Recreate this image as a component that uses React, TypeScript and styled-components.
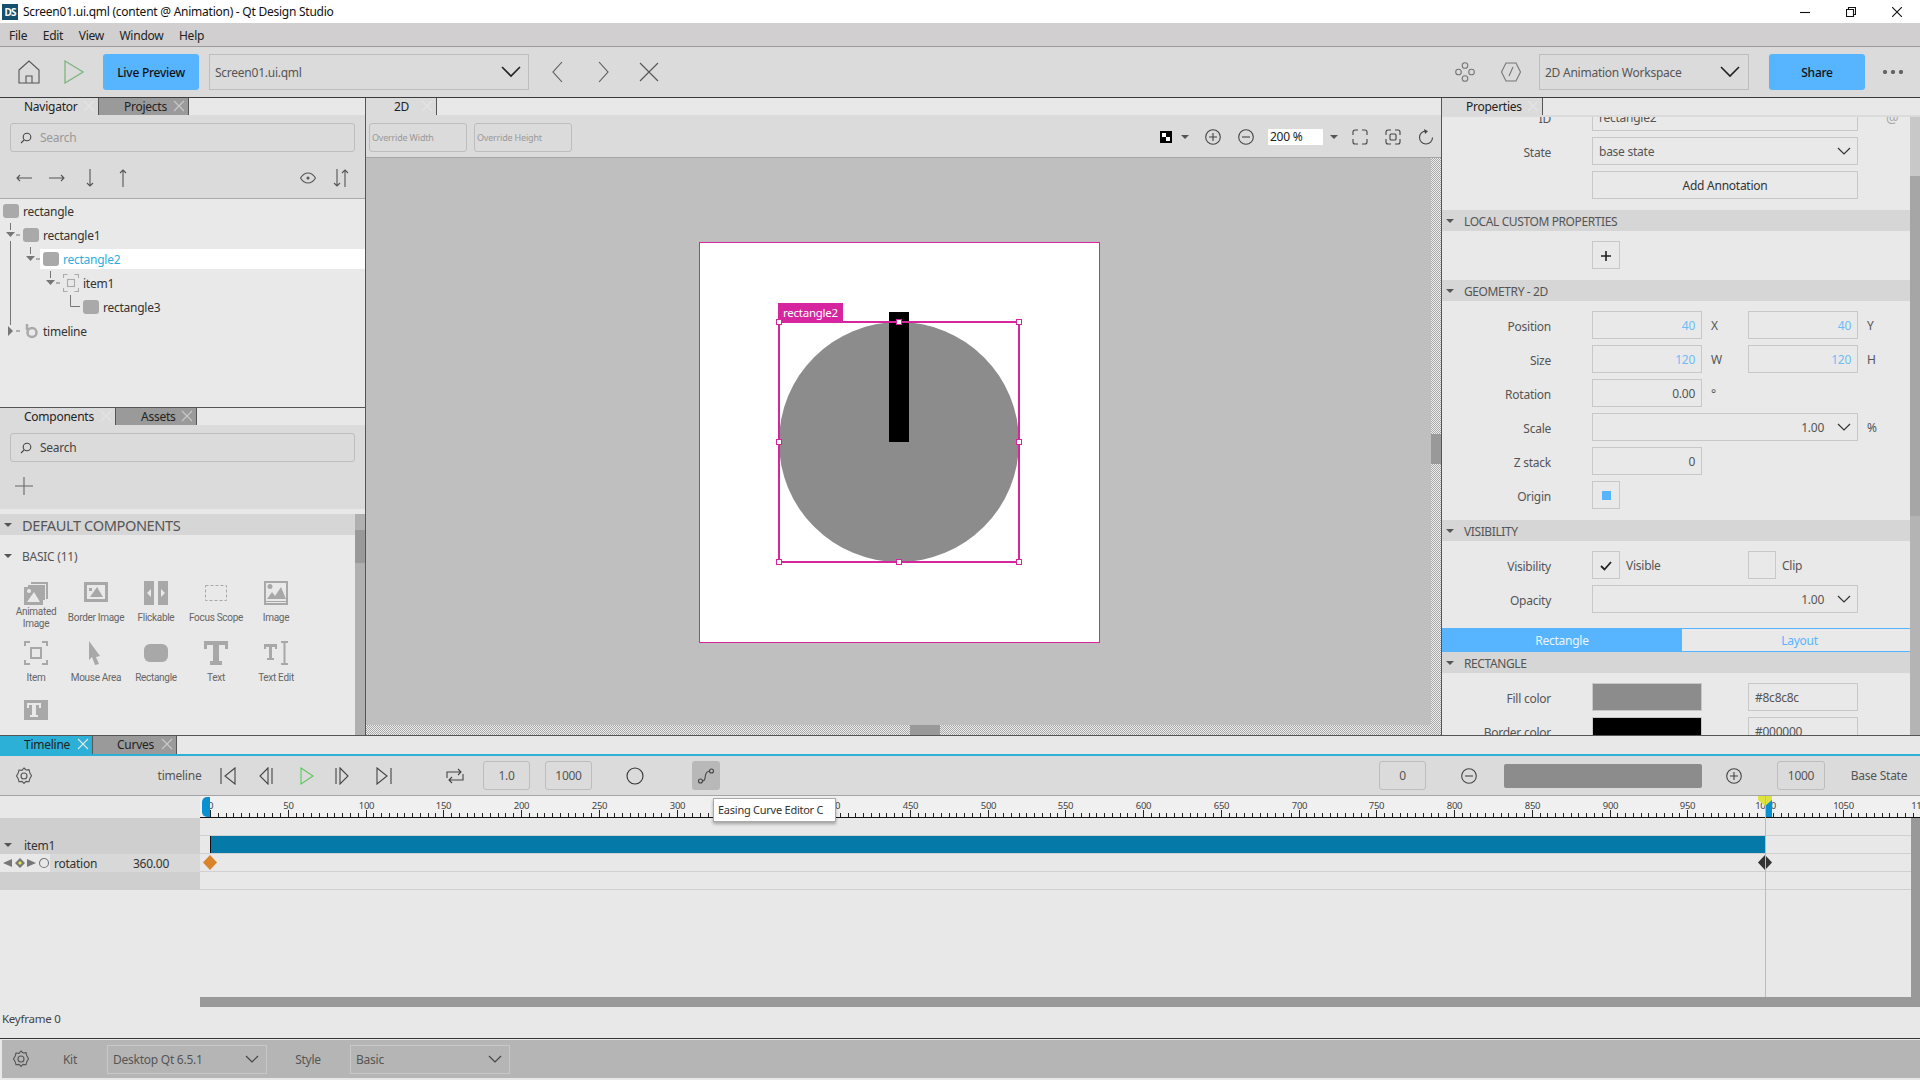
import React from "react";
import styled, { createGlobalStyle } from "styled-components";

const FONT = `"Noto Sans", "Open Sans", sans-serif`;
const MAGENTA = "#d6269f";
const BLUE = "#57b5ff";

const GlobalStyle = createGlobalStyle`
  html, body { margin: 0; padding: 0; width: 1920px; height: 1080px; overflow: hidden; }
  body { font-family: ${FONT}; font-size: 12px; color: #333; background: #e8e8e8; }
  * { box-sizing: border-box; }
`;

// Small line icons, all share this base
const Svg = styled.svg.attrs<{ $color?: string; strokeWidth?: number }>((p) => ({
  fill: "none",
  stroke: "currentColor",
  strokeWidth: p.strokeWidth ?? 1.1,
}))<{ $color?: string }>`
  display: block;
  flex: none;
  color: ${(p) => p.$color || "#555"};
`;

const Page = styled.div`
  width: 1920px;
  height: 1080px;
  display: flex;
  flex-direction: column;
  letter-spacing: -0.25px;
`;

/* window chrome */
const TitleBar = styled.div`
  height: 23px;
  background: #fff;
  display: flex;
  align-items: center;
  padding-left: 2px;
  font-size: 12px;
  color: #111;
`;
const AppLogo = styled.div`
  width: 16px;
  height: 16px;
  background: #14506e;
  color: #fff;
  font-size: 10px;
  font-weight: 700;
  line-height: 16px;
  text-align: center;
  margin-right: 5px;
  letter-spacing: -1px;
`;
const WindowButtons = styled.div`
  margin-left: auto;
  display: flex;
`;
const WindowButton = styled.div`
  width: 46px;
  height: 23px;
  display: flex;
  align-items: center;
  justify-content: center;
`;
const MenuBar = styled.div`
  height: 24px;
  background: #d1cfcf;
  border-bottom: 1px solid #9b9b9b;
  display: flex;
  align-items: center;
  padding: 2px 0 0 9px;
  gap: 15.5px;
  color: #222;
`;
const Toolbar = styled.div`
  height: 50px;
  background: #dcdbdb;
  display: flex;
  align-items: center;
`;
const Slot = styled.div<{ $w: number; $ml?: number }>`
  width: ${(p) => p.$w}px;
  margin-left: ${(p) => p.$ml || 0}px;
  flex: none;
  display: flex;
  justify-content: center;
  align-items: center;
  white-space: nowrap;
`;
const BlueButton = styled.div<{ $w: number; $ml: number }>`
  width: ${(p) => p.$w}px;
  margin-left: ${(p) => p.$ml}px;
  height: 36px;
  background: ${BLUE};
  border-radius: 3px;
  color: #111;
  font-weight: 500;
  display: flex;
  align-items: center;
  justify-content: center;
`;
const Combo = styled.div<{ $w: number; $h?: number; $ml: number; $border?: string; $pad?: number }>`
  width: ${(p) => p.$w}px;
  height: ${(p) => p.$h || 36}px;
  margin-left: ${(p) => p.$ml}px;
  border: 1px solid ${(p) => p.$border || "#bdbdbd"};
  display: flex;
  align-items: center;
  justify-content: space-between;
  padding: 0 ${(p) => p.$pad ?? 8}px 0 5px;
  color: #555;
  flex: none;
`;
const Spacer = styled.div`
  flex: 1;
`;

/* main area */
const Main = styled.div`
  height: 638px;
  display: flex;
  border-top: 1px solid #3c3c3c;
`;
const LeftPanel = styled.div`
  width: 366px;
  border-right: 1px solid #555;
  display: flex;
  flex-direction: column;
`;
const TabBar = styled.div<{ $h?: number }>`
  height: ${(p) => p.$h || 17}px;
  background: #e8e8e8;
  display: flex;
  flex: none;
`;
const Tab = styled.div<{ $w: number; $tone?: "on" | "off" | "teal"; $pad: number }>`
  width: ${(p) => p.$w}px;
  background: ${(p) => (p.$tone === "off" ? "#9a9a9a" : p.$tone === "teal" ? "#2cb0d8" : "#dcdbdb")};
  border-right: 1px solid #555;
  padding-left: ${(p) => p.$pad}px;
  line-height: 16px;
  color: #222;
  display: flex;
  align-items: center;
  font-size: 12px;
  position: relative;
`;
const TabClose = styled.span`
  position: absolute;
  right: 3px;
  top: 2px;
  width: 12px;
  height: 12px;
`;
const NavSection = styled.div`
  height: 309px;
  display: flex;
  flex-direction: column;
  flex: none;
`;
const GreyBox = styled.div<{ $h: number }>`
  height: ${(p) => p.$h}px;
  background: #dcdbdb;
  flex: none;
`;
const SearchWrap = styled.div`
  padding: 8px 10px 0;
`;
const SearchBox = styled.div<{ $strong?: boolean }>`
  height: 29px;
  border: 1px solid #bdbdbd;
  border-radius: 3px;
  display: flex;
  align-items: center;
  padding-left: 9px;
  gap: 8px;
  color: ${(p) => (p.$strong ? "#444" : "#999")};
`;
const NavIcons = styled.div`
  height: 46px;
  margin-top: 3px;
  display: flex;
  align-items: center;
`;
const Tree = styled.div`
  position: relative;
  flex: 1;
  background: #e9e9e9;
  border-top: 1px solid #aaa;
`;
const TreeLines = styled.svg`
  position: absolute;
  left: 0;
  top: 0;
  color: #777;
`;
const TreeRow = styled.div<{ $indent: number; $selected?: boolean }>`
  height: 24px;
  display: flex;
  align-items: center;
  gap: 4px;
  padding-left: ${(p) => 3 + p.$indent * 20}px;
  color: ${(p) => (p.$selected ? "#2eaee0" : "#333")};
  background: ${(p) => (p.$selected ? "linear-gradient(#fff, #fff) no-repeat 40px 2px / 100% 20px" : "none")};
  position: relative;
`;
const RectIcon = styled.span`
  width: 16px;
  height: 14px;
  background: #a9a9a9;
  border-radius: 3px;
  display: block;
  flex: none;
`;
const ComponentsSection = styled.div`
  flex: 1;
  border-top: 1px solid #555;
  display: flex;
  flex-direction: column;
  min-height: 0;
`;
const AddRow = styled.div`
  height: 47px;
  display: flex;
  align-items: center;
  padding-left: 15px;
`;
const ListArea = styled.div`
  flex: 1;
  display: flex;
  margin-top: 5px;
  min-height: 0;
  background: #e9e9e9;
`;
const ListBody = styled.div`
  flex: 1;
`;
const ScrollTrack = styled.div<{ $top: number; $h: number; $track?: string; $thumb?: string }>`
  width: 10px;
  flex: none;
  background: ${(p) => p.$track || "#b0b0b0"};
  position: relative;
  &::after {
    content: "";
    position: absolute;
    left: 0;
    right: 0;
    top: ${(p) => p.$top}px;
    height: ${(p) => p.$h}px;
    background: ${(p) => p.$thumb || "#999"};
  }
`;
const SectionHead = styled.div<{ $big?: boolean }>`
  height: 21px;
  background: #d6d6d6;
  display: flex;
  align-items: center;
  color: #555;
  padding: 1px 0 0 4px;
  gap: ${(p) => (p.$big ? 10 : 10)}px;
  font-size: ${(p) => (p.$big ? 14.6 : 12)}px;
  flex: none;
  letter-spacing: -0.4px;
`;
const Caret = styled.i`
  display: block;
  width: 0;
  height: 0;
  border-left: 4px solid transparent;
  border-right: 4px solid transparent;
  border-top: 4px solid #555;
  flex: none;
`;
const SubHead = styled.div`
  height: 20px;
  margin-top: 11px;
  display: flex;
  align-items: center;
  gap: 10px;
  padding-left: 4px;
  color: #555;
`;
const ComponentGrid = styled.div`
  display: grid;
  grid-template-columns: repeat(5, 60px);
  grid-auto-rows: 59.5px;
  padding: 15px 0 0 6px;
`;
const ComponentCell = styled.div`
  display: flex;
  flex-direction: column;
  align-items: center;
  color: #666;
  font-family: Roboto, sans-serif;
  font-size: 10px;
  line-height: 12px;
  text-align: center;
  letter-spacing: -0.3px;
`;
const CellLabel = styled.div`
  height: 24px;
  width: 58px;
  margin-top: 1px;
  display: flex;
  align-items: center;
  justify-content: center;
`;

/* centre canvas */
const Center = styled.div`
  width: 1076px;
  border-right: 1px solid #555;
  display: flex;
  flex-direction: column;
`;
const CanvasBar = styled.div`
  height: 43px;
  background: #dcdbdb;
  border-bottom: 1px solid #a5a5a5;
  display: flex;
  align-items: center;
  padding: 2px 0 0 3px;
  flex: none;
`;
const OverrideBox = styled.div`
  width: 98px;
  height: 29px;
  border: 1px solid #bdbdbd;
  border-radius: 3px;
  margin-right: 7px;
  color: #999;
  font-size: 9px;
  letter-spacing: -0.2px;
  display: flex;
  align-items: center;
  padding-left: 2px;
`;
const ZoomInput = styled.div`
  width: 55px;
  height: 16px;
  margin-left: 4px;
  background: #fff;
  color: #222;
  padding-left: 2px;
  line-height: 16px;
`;
const Canvas = styled.div`
  position: relative;
  flex: 1;
  background: #bfbfbf;
  overflow: hidden;
`;
const Dither = styled.div<{ $vertical?: boolean }>`
  position: absolute;
  background: repeating-conic-gradient(#a8a8a8 0 25%, #eee 0 50%) 0 0 / 2px 2px;
  ${(p) =>
    p.$vertical
      ? "right: 0; top: 0; bottom: 0; width: 10px;"
      : "left: 0; right: 0; bottom: 0; height: 10px;"}
`;
const DitherThumb = styled.div<{ $vertical?: boolean }>`
  position: absolute;
  background: #999;
  ${(p) =>
    p.$vertical
      ? "right: 0; top: 276px; width: 10px; height: 30px;"
      : "left: 544px; bottom: 0; width: 30px; height: 10px;"}
`;
const Artboard = styled.div`
  position: absolute;
  left: 333px;
  top: 84px;
  width: 401px;
  height: 401px;
  background: #fff;
  border: 1px solid ${MAGENTA};
`;
const Selection = styled.div`
  position: absolute;
  left: 79px;
  top: 79px;
  width: 240px;
  height: 240px;
  &::after {
    content: "";
    position: absolute;
    inset: -1px;
    border: 2px solid ${MAGENTA};
  }
`;
const Circle = styled.div`
  position: absolute;
  inset: 0;
  border-radius: 50%;
  background: #8c8c8c;
`;
const Needle = styled.div`
  position: absolute;
  left: 110px;
  top: -10px;
  width: 20px;
  height: 130px;
  background: #000;
`;
const SelectionLabel = styled.div`
  position: absolute;
  left: -1px;
  top: -19px;
  width: 65px;
  height: 19px;
  background: ${MAGENTA};
  color: #fff;
  font-size: 11.5px;
  line-height: 19px;
  padding-left: 5px;
`;
const Handle = styled.div<{ $x: number; $y: number }>`
  position: absolute;
  z-index: 2;
  left: ${(p) => p.$x - 3}px;
  top: ${(p) => p.$y - 3}px;
  width: 6px;
  height: 6px;
  background: #fff;
  border: 1.5px solid ${MAGENTA};
`;

/* properties */
const RightPanel = styled.div`
  flex: 1;
  display: flex;
  flex-direction: column;
  min-width: 0;
`;
const PropsBody = styled.div`
  flex: 1;
  display: flex;
  overflow: hidden;
  background: #e9e9e9;
  border-top: 2px solid #dcdbdb;
`;
const PropsList = styled.div`
  flex: 1;
  margin-top: -14px;
`;
const PropRow = styled.div<{ $mt?: number }>`
  height: 28px;
  margin-top: ${(p) => p.$mt ?? 6}px;
  display: flex;
  align-items: center;
  color: #555;
`;
const PropLabel = styled.div`
  width: 109px;
  margin-right: 41px;
  padding-top: 2px;
  text-align: right;
  flex: none;
`;
const Field = styled.div<{ $w?: number; $align?: string; $color?: string }>`
  width: ${(p) => p.$w || 110}px;
  height: 28px;
  flex: none;
  border: 1px solid #c8c8c8;
  display: flex;
  align-items: center;
  justify-content: ${(p) => p.$align || "flex-end"};
  padding: 1px 6px 0;
  color: ${(p) => p.$color || "#555"};
  gap: 13px;
`;
const Swatch = styled.div<{ $color: string }>`
  width: 110px;
  height: 28px;
  flex: none;
  background: ${(p) => p.$color};
  border: 1px solid #c8c8c8;
`;
const Unit = styled.div<{ $w?: number; $pl?: number }>`
  width: ${(p) => p.$w || 46}px;
  padding-left: ${(p) => p.$pl ?? 9}px;
  flex: none;
`;
const AtSign = styled.span`
  color: #aaa;
  font-size: 14px;
`;
const OriginDot = styled.div`
  width: 9px;
  height: 9px;
  background: ${BLUE};
`;
const ModeTabs = styled.div`
  height: 24px;
  margin-top: 15px;
  display: flex;
  border-top: 1px solid ${BLUE};
  border-bottom: 1px solid ${BLUE};
`;
const ModeTab = styled.div<{ $active?: boolean }>`
  width: ${(p) => (p.$active ? 240 : 228)}px;
  background: ${(p) => (p.$active ? BLUE : "#e9e9e9")};
  color: ${(p) => (p.$active ? "#e9f5ff" : BLUE)};
  padding-left: ${(p) => (p.$active ? 0 : 7)}px;
  display: flex;
  align-items: center;
  justify-content: center;
`;
const Gap = styled.div<{ $h: number }>`
  height: ${(p) => p.$h}px;
`;

/* timeline */
const TimelinePanel = styled.div`
  height: 303px;
  border-top: 1px solid #555;
  position: relative;
  display: flex;
  flex-direction: column;
  overflow: hidden;
`;
const TimelineBar = styled.div`
  height: 42px;
  background: #dcdbdb;
  border-top: 2px solid #2cb0d8;
  border-bottom: 1px solid #a5a5a5;
  display: flex;
  align-items: center;
  color: #555;
  flex: none;
  padding-right: 14px;
`;
const SmallBox = styled.div<{ $w?: number; $ml: number }>`
  width: ${(p) => p.$w || 47}px;
  margin-left: ${(p) => p.$ml}px;
  height: 29px;
  flex: none;
  border: 1px solid #bdbdbd;
  border-radius: 3px;
  display: flex;
  align-items: center;
  justify-content: center;
  color: #555;
`;
const CurveButton = styled.div`
  width: 28px;
  height: 29px;
  margin-left: 34px;
  background: #b8b8b8;
  border-radius: 3px;
  display: flex;
  align-items: center;
  justify-content: center;
`;
const SliderTrack = styled.div`
  width: 198px;
  height: 24px;
  margin-left: 12px;
  border-radius: 2px;
  background: #8c8c8c;
`;
const Tooltip = styled.div`
  position: absolute;
  left: 713px;
  top: 62px;
  width: 123px;
  height: 24px;
  background: #fff;
  border: 1px solid #aaa;
  box-shadow: 0 2px 3px rgba(0, 0, 0, 0.3);
  color: #333;
  font-size: 11px;
  line-height: 22px;
  padding-left: 4px;
  white-space: nowrap;
  overflow: hidden;
  z-index: 3;
`;
const RulerRow = styled.div`
  height: 22px;
  display: flex;
  flex: none;
`;
const RulerLeft = styled.div`
  width: 200px;
  background: #e8e8e8;
  flex: none;
`;
const RulerBody = styled.div`
  flex: 1;
  background: #f0f0f0;
  position: relative;
  overflow: hidden;
`;
const Marker = styled.div<{ $start?: boolean }>`
  position: absolute;
  top: 1px;
  height: 20px;
  background: #0a8fd0;
  ${(p) => (p.$start ? "left: 2px; width: 8px; border-radius: 5px 0 0 5px;" : "left: 1565px; width: 7px;")}
`;
const PlayheadCap = styled.div`
  position: absolute;
  left: 1558px;
  top: 0;
  width: 14px;
  height: 10px;
  background: #dfe23c;
  clip-path: polygon(0 0, 100% 0, 100% 40%, 50% 100%, 0 40%);
`;
const TrackRow = styled.div`
  height: 18px;
  display: flex;
  flex: none;
`;
const TrackLeft = styled.div<{ $tone?: string }>`
  width: 200px;
  flex: none;
  background: ${(p) => p.$tone || "#d0cfcf"};
  display: flex;
  align-items: center;
  color: #333;
`;
const TrackName = styled.span<{ $ml: number; $w?: number }>`
  margin-left: ${(p) => p.$ml}px;
  width: ${(p) => p.$w || 60}px;
  flex: none;
`;
const TrackRight = styled.div`
  flex: 1;
  position: relative;
  background: #e8e8e8;
  border-bottom: 1px solid #d0d0d0;
`;
const ClipBar = styled.div`
  position: absolute;
  left: 10px;
  top: 0;
  width: 1555px;
  height: 17px;
  background: #0579a8;
  border-left: 1px solid #111;
`;
const Diamond = styled.div<{ $color: string; $x: number }>`
  position: absolute;
  left: ${(p) => p.$x - 7}px;
  top: 1px;
  width: 14px;
  height: 15px;
  background: ${(p) => p.$color};
  clip-path: polygon(50% 0, 100% 50%, 50% 100%, 0 50%);
`;
const Playhead = styled.div`
  position: absolute;
  left: 1765px;
  top: 60px;
  width: 1px;
  height: 201px;
  background: #e2c23a;
  z-index: 2;
`;
const KeyTools = styled.div`
  width: 50px;
  height: 18px;
  background: #e8e8e8;
  display: flex;
  align-items: center;
  flex: none;
  padding-left: 1px;
`;
const TimelineFill = styled.div`
  flex: 1;
  position: relative;
`;
const VScroll = styled.div`
  position: absolute;
  right: 0;
  top: 82px;
  width: 9px;
  height: 179px;
  background: #999;
`;
const HScroll = styled.div`
  position: absolute;
  left: 200px;
  right: 0;
  top: 261px;
  height: 10px;
  background: #999;
`;
const KeyframeText = styled.div`
  position: absolute;
  left: 2px;
  top: 275px;
  color: #444;
  font-size: 11.5px;
`;

/* status bar */
const StatusBar = styled.div`
  flex: 1;
  border-top: 1px solid #333;
  background: #e8e8e8;
  padding: 1px 0 2px 2px;
  display: flex;
`;
const StatusInner = styled.div`
  flex: 1;
  background: #b5b5b5;
  display: flex;
  align-items: center;
  color: #555;
`;

const Cross = ({ dark }: { dark?: boolean }) => (
  <TabClose>
    <Svg width={12} height={12} viewBox="0 0 12 12" $color={dark ? "#c9c9c9" : "#e4e4e4"}>
      <path d="M1 1l10 10M11 1L1 11" />
    </Svg>
  </TabClose>
);
const Chevron = ({ big, color }: { big?: boolean; color?: string }) =>
  big ? (
    <Svg width={20} height={12} viewBox="0 0 20 12" $color={color || "#222"} strokeWidth={1.6}>
      <path d="M1 1l9 9 9-9" />
    </Svg>
  ) : (
    <Svg width={14} height={9} viewBox="0 0 14 9" $color={color || "#333"} strokeWidth={1.2}>
      <path d="M1 1l6 6 6-6" />
    </Svg>
  );
const MagnifierIcon = () => (
  <Svg width={12} height={12} viewBox="0 0 12 12" $color="#444">
    <circle cx="7" cy="5" r="3.8" />
    <path d="M4.2 7.8L1 11" />
  </Svg>
);
const Gear = ({ color }: { color?: string }) => (
  <Svg width={16} height={18} viewBox="0 0 16 18" $color={color || "#555"}>
    <path d="M8 1l2 2 3-.3.8 3 1.7 3-1.7 3-.8 3-3-.3-2 2-2-2-3 .3-.8-3L.5 9l1.7-3 .8-3 3 .3z" />
    <circle cx="8" cy="9" r="3" />
  </Svg>
);
const PlusCircle = ({ minus }: { minus?: boolean }) => (
  <Svg width={16} height={16} viewBox="0 0 16 16" $color="#444">
    <circle cx="8" cy="8" r="7.3" />
    <path d={minus ? "M4 8h8" : "M4 8h8M8 4v8"} />
  </Svg>
);
const Transport = ({ d, color }: { d: string; color?: string }) => (
  <Svg width={18} height={18} viewBox="0 0 18 18" $color={color || "#444"}>
    <path d={d} />
  </Svg>
);
const FRAME_PATH = "M1 6V3a2 2 0 012-2h3M10 1h3a2 2 0 012 2v3M15 10v3a2 2 0 01-2 2h-3M6 15H3a2 2 0 01-2-2v-3";

const TREE_ROWS = [
  { name: "rectangle", indent: 0 },
  { name: "rectangle1", indent: 1 },
  { name: "rectangle2", indent: 2, selected: true },
  { name: "item1", indent: 3, item: true },
  { name: "rectangle3", indent: 4 },
  { name: "timeline", indent: 1, timeline: true },
];

const FILL = "#a8a8a8";
const COMPONENTS: { label: string; icon: React.ReactNode }[] = [
  {
    label: "Animated Image",
    icon: (
      <svg width={24} height={24} viewBox="0 0 24 24">
        <path d="M7 1h17v17h-2V3H7zM4 4h17v15h-2V6H4z" fill={FILL} />
        <rect x="0" y="6" width="19" height="18" fill={FILL} />
        <path d="M3 21l7-10 6 10z" fill="#e9e9e9" />
        <circle cx="5" cy="10" r="2" fill="#e9e9e9" />
      </svg>
    ),
  },
  {
    label: "Border Image",
    icon: (
      <svg width={24} height={24} viewBox="0 0 24 24">
        <path d="M0 1h24v20H0z" fill={FILL} />
        <path d="M3 4h18v14H3z" fill="#e9e9e9" />
        <path d="M6 16l7-10 6 10zM5 7h3v3H5z" fill={FILL} />
      </svg>
    ),
  },
  {
    label: "Flickable",
    icon: (
      <svg width={24} height={24} viewBox="0 0 24 24">
        <rect x="0" width="10" height="24" fill={FILL} />
        <rect x="14" width="10" height="24" fill={FILL} />
        <path d="M3 12l4-4v8zM21 12l-4-4v8z" fill="#e9e9e9" />
      </svg>
    ),
  },
  {
    label: "Focus Scope",
    icon: (
      <svg width={24} height={24} viewBox="0 0 24 24">
        <rect x="1.500" y="4.500" width="21" height="15" fill="none" stroke={FILL} strokeDasharray="3 2" />
      </svg>
    ),
  },
  {
    label: "Image",
    icon: (
      <svg width={24} height={24} viewBox="0 0 24 24">
        <path d="M0 0h24v24H0z" fill={FILL} />
        <path d="M2 2h20v20H2z" fill="#e9e9e9" />
        <path d="M3 18l5-7 3 4 6-9 5 12zM2 20h20v1H2z" fill={FILL} />
        <circle cx="6" cy="5.500" r="2.500" fill={FILL} />
      </svg>
    ),
  },
  {
    label: "Item",
    icon: (
      <svg width={24} height={24} viewBox="0 0 24 24" fill="none" stroke={FILL} strokeWidth="2">
        <path d="M1 5V1h5M18 1h5v4M23 19v4h-5M6 23H1v-4" />
        <rect x="7" y="7" width="10" height="10" />
      </svg>
    ),
  },
  {
    label: "Mouse Area",
    icon: (
      <svg width={24} height={24} viewBox="0 0 24 24">
        <path d="M5 0l11 15-4 1 3 7-4 1-3-8-3 3z" fill={FILL} />
      </svg>
    ),
  },
  {
    label: "Rectangle",
    icon: (
      <svg width={24} height={24} viewBox="0 0 24 24">
        <rect x="0" y="3" width="24" height="18" rx="6" fill={FILL} />
      </svg>
    ),
  },
  {
    label: "Text",
    icon: (
      <svg width={24} height={24} viewBox="0 0 24 24">
        <path d="M0 0h24v8h-3V4h-6v16h3v4H6v-4h3V4H3v4H0z" fill={FILL} />
      </svg>
    ),
  },
  {
    label: "Text Edit",
    icon: (
      <svg width={24} height={24} viewBox="0 0 24 24">
        <path d="M0 3h13v5h-2V6H8v11h2v2H3v-2h2V6H2v2H0z" fill={FILL} />
        <path d="M17 0h7v2h-2.500v20H24v2h-7v-2h2.500V2H17z" fill={FILL} />
      </svg>
    ),
  },
  {
    label: "",
    icon: (
      <svg width={24} height={20} viewBox="0 0 24 20">
        <path d="M0 0h24v20H0z" fill={FILL} />
        <path d="M3 3h14v5h-2V5h-3v10h2v2H6v-2h2V5H5v3H3z" fill="#e9e9e9" />
      </svg>
    ),
  },
];

const PX_PER_UNIT = 1.555;
const Ruler = () => {
  const ticks: React.ReactNode[] = [];
  for (let v = 0; v <= 1100; v += 5) {
    const x = Math.round(10 + v * PX_PER_UNIT) + 0.5;
    const major = v % 50 === 0;
    ticks.push(<path key={v} d={`M${x} ${major ? 14 : 17}V21`} stroke="#222" />);
    if (major) {
      ticks.push(
        <text key={`t${v}`} x={x} y={13} fontSize="9.5" textAnchor="middle" fill="#444" fontFamily={FONT}>
          {v}
        </text>
      );
    }
  }
  return (
    <svg width={1720} height={22} style={{ display: "block" }}>
      {ticks}
      <path d="M0 21.500H1720" stroke="#111" />
    </svg>
  );
};

const App = (): JSX.Element => {
  return (
    <Page>
      <GlobalStyle />
      <TitleBar>
        <AppLogo>DS</AppLogo>
        Screen01.ui.qml (content @ Animation) - Qt Design Studio
        <WindowButtons>
          <WindowButton>
            <Svg width={10} height={10} viewBox="0 0 10 10" $color="#111">
              <path d="M0 5.500h10" />
            </Svg>
          </WindowButton>
          <WindowButton>
            <Svg width={10} height={10} viewBox="0 0 10 10" $color="#111">
              <path d="M2.500 2.500V.5h7v7h-2M.5 2.500h7v7h-7z" />
            </Svg>
          </WindowButton>
          <WindowButton>
            <Svg width={10} height={10} viewBox="0 0 10 10" $color="#111">
              <path d="M0 0l10 10M10 0L0 10" />
            </Svg>
          </WindowButton>
        </WindowButtons>
      </TitleBar>
      <MenuBar>
        <span>File</span>
        <span>Edit</span>
        <span>View</span>
        <span>Window</span>
        <span>Help</span>
      </MenuBar>
      <Toolbar>
        <Slot $w={58}>
          <Svg width={22} height={24} viewBox="0 0 22 24" $color="#555">
            <path d="M1 10L11 1l10 9v13H1zM8 23v-7h6v7" />
          </Svg>
        </Slot>
        <Slot $w={32}>
          <Svg width={20} height={24} viewBox="0 0 20 24" $color="#7fb67f" strokeWidth={1.3}>
            <path d="M1 1l18 11L1 23z" />
          </Svg>
        </Slot>
        <BlueButton $w={96} $ml={13}>Live Preview</BlueButton>
        <Combo $w={320} $ml={10} $pad={7}>
          Screen01.ui.qml
          <Chevron big />
        </Combo>
        <Slot $w={46} $ml={5}>
          <Svg width={11} height={22} viewBox="0 0 11 22">
            <path d="M10 1L1 11l9 10" />
          </Svg>
        </Slot>
        <Slot $w={46}>
          <Svg width={11} height={22} viewBox="0 0 11 22">
            <path d="M1 1l9 10L1 21" />
          </Svg>
        </Slot>
        <Slot $w={46}>
          <Svg width={20} height={20} viewBox="0 0 20 20">
            <path d="M1 1l18 18M19 1L1 19" />
          </Svg>
        </Slot>
        <Spacer />
        <Slot $w={46}>
          <Svg width={20} height={20} viewBox="0 0 20 20" $color="#777">
            <circle cx="10" cy="3.500" r="2.800" />
            <circle cx="3.500" cy="10" r="2.800" />
            <circle cx="16.500" cy="10" r="2.800" />
            <circle cx="10" cy="16.500" r="2.800" />
          </Svg>
        </Slot>
        <Slot $w={46}>
          <Svg width={20} height={20} viewBox="0 0 20 20" $color="#777">
            <path d="M5 1h10l4.500 9L15 19H5L.5 10zM12 5l-4 9" />
          </Svg>
        </Slot>
        <Combo $w={210} $ml={5} $pad={8}>
          2D Animation Workspace
          <Chevron big />
        </Combo>
        <BlueButton $w={96} $ml={20}>Share</BlueButton>
        <Slot $w={55}>
          <Svg width={20} height={4} viewBox="0 0 20 4" $color="#666">
            <circle cx="2" cy="2" r="1.600" fill="#666" />
            <circle cx="10" cy="2" r="1.600" fill="#666" />
            <circle cx="18" cy="2" r="1.600" fill="#666" />
          </Svg>
        </Slot>
      </Toolbar>

      <Main>
        <LeftPanel>
          <NavSection>
            <TabBar>
              <Tab $w={99} $pad={24}>Navigator<Cross /></Tab>
              <Tab $w={90} $tone="off" $pad={25}>Projects<Cross dark /></Tab>
            </TabBar>
            <GreyBox $h={83}>
              <SearchWrap>
                <SearchBox>
                  <MagnifierIcon />
                  Search
                </SearchBox>
              </SearchWrap>
              <NavIcons>
                <Slot $w={33} $ml={7}>
                  <Svg width={16} height={8} viewBox="0 0 16 8">
                    <path d="M16 4H1M4 1L1 4l3 3" />
                  </Svg>
                </Slot>
                <Slot $w={33}>
                  <Svg width={16} height={8} viewBox="0 0 16 8">
                    <path d="M0 4h15M12 1l3 3-3 3" />
                  </Svg>
                </Slot>
                <Slot $w={33}>
                  <Svg width={8} height={18} viewBox="0 0 8 18">
                    <path d="M4 0v17M1 14l3 3 3-3" />
                  </Svg>
                </Slot>
                <Slot $w={33}>
                  <Svg width={8} height={18} viewBox="0 0 8 18">
                    <path d="M4 18V1M1 4l3-3 3 3" />
                  </Svg>
                </Slot>
                <Slot $w={33} $ml={152}>
                  <Svg width={16} height={12} viewBox="0 0 16 12">
                    <path d="M.5 6C3 2 5 1 8 1s5 1 7.500 5C13 10 11 11 8 11S3 10 .5 6z" />
                    <circle cx="8" cy="6" r="1" fill="#555" />
                  </Svg>
                </Slot>
                <Slot $w={33}>
                  <Svg width={16} height={18} viewBox="0 0 16 18">
                    <path d="M4 0v17M1 14l3 3 3-3M12 18V1M9 4l3-3 3 3" />
                  </Svg>
                </Slot>
              </NavIcons>
            </GreyBox>
            <Tree>
              <TreeLines width={110} height={150} viewBox="0 0 110 150" fill="none" stroke="currentColor">
                <path d="M10.500 24v7M10.500 42v84M16 36h4M30.500 48v7M36 60h4M50.500 72v7M56 84h4M70.500 96v11.500H80M16 132h4" />
                <path d="M6 33l4.500 5 4.500-5zM26 57l4.500 5 4.500-5zM46 81l4.500 5 4.500-5zM8 127l5 5-5 5z" fill="#777" stroke="none" />
              </TreeLines>
              {TREE_ROWS.map((r) => (
                <TreeRow key={r.name} $indent={r.indent} $selected={r.selected}>
                  {r.item ? (
                    <Svg width={16} height={18} viewBox="0 0 16 18" $color="#aaa">
                      <path d="M.5 4V.5h4M11.500.5h4V4M15.500 14v3.500h-4M4.500 17.500h-4V14" />
                      <rect x="4.500" y="5.500" width="7" height="7" />
                    </Svg>
                  ) : r.timeline ? (
                    <Svg width={16} height={16} viewBox="0 0 16 16" $color="#a9a9a9" strokeWidth={2.5}>
                      <circle cx="9" cy="9.500" r="4.500" />
                      <path d="M4 1v6" />
                    </Svg>
                  ) : (
                    <RectIcon />
                  )}
                  {r.name}
                </TreeRow>
              ))}
            </Tree>
          </NavSection>

          <ComponentsSection>
            <TabBar>
              <Tab $w={116} $pad={24}>Components<Cross /></Tab>
              <Tab $w={81} $tone="off" $pad={25}>Assets<Cross dark /></Tab>
            </TabBar>
            <GreyBox $h={84}>
              <SearchWrap>
                <SearchBox $strong>
                  <MagnifierIcon />
                  Search
                </SearchBox>
              </SearchWrap>
              <AddRow>
                <Svg width={18} height={18} viewBox="0 0 18 18" $color="#666">
                  <path d="M0 9h18M9 0v18" />
                </Svg>
              </AddRow>
            </GreyBox>
            <ListArea>
              <ListBody>
                <SectionHead $big>
                  <Caret />
                  DEFAULT COMPONENTS
                </SectionHead>
                <SubHead>
                  <Caret />
                  BASIC (11)
                </SubHead>
                <ComponentGrid>
                  {COMPONENTS.map((c, i) => (
                    <ComponentCell key={i}>
                      {c.icon}
                      <CellLabel>{c.label}</CellLabel>
                    </ComponentCell>
                  ))}
                </ComponentGrid>
              </ListBody>
              <ScrollTrack $top={16} $h={33} />
            </ListArea>
          </ComponentsSection>
        </LeftPanel>

        <Center>
          <TabBar>
            <Tab $w={71} $pad={28}>2D<Cross /></Tab>
          </TabBar>
          <CanvasBar>
            <OverrideBox>Override Width</OverrideBox>
            <OverrideBox>Override Height</OverrideBox>
            <Spacer />
            <Svg width={12} height={12} viewBox="0 0 12 12" $color="#000">
              <rect width="12" height="12" fill="#000" stroke="none" />
              <rect x="2" y="2" width="4" height="4" fill="#fff" stroke="none" />
              <rect x="6" y="6" width="4" height="4" fill="#fff" stroke="none" />
            </Svg>
            <Slot $w={26}><Caret /></Slot>
            <Slot $w={30}><PlusCircle /></Slot>
            <Slot $w={36}><PlusCircle minus /></Slot>
            <ZoomInput>200 %</ZoomInput>
            <Slot $w={22}><Caret /></Slot>
            <Slot $w={30}>
              <Svg width={16} height={16} viewBox="0 0 16 16" $color="#444">
                <path d={FRAME_PATH} />
              </Svg>
            </Slot>
            <Slot $w={36}>
              <Svg width={16} height={16} viewBox="0 0 16 16" $color="#444">
                <path d={FRAME_PATH} />
                <rect x="5" y="5" width="6" height="6" rx="1" />
              </Svg>
            </Slot>
            <Slot $w={30}>
              <Svg width={16} height={16} viewBox="0 0 16 16" $color="#444">
                <path d="M8 2a6.500 6.500 0 106.500 6.500" />
                <path d="M6 0l4 2.200L7 5z" fill="#444" stroke="none" />
              </Svg>
            </Slot>
          </CanvasBar>
          <Canvas>
            <Dither $vertical />
            <Dither />
            <DitherThumb $vertical />
            <DitherThumb />
            <Artboard>
              <Selection>
                <Circle />
                <Needle />
                <SelectionLabel>rectangle2</SelectionLabel>
                <Handle $x={0} $y={0} />
                <Handle $x={120} $y={0} />
                <Handle $x={240} $y={0} />
                <Handle $x={0} $y={120} />
                <Handle $x={240} $y={120} />
                <Handle $x={0} $y={240} />
                <Handle $x={120} $y={240} />
                <Handle $x={240} $y={240} />
              </Selection>
            </Artboard>
          </Canvas>
        </Center>

        <RightPanel>
          <TabBar>
            <Tab $w={101} $pad={24}>Properties<Cross /></Tab>
          </TabBar>
          <PropsBody>
            <PropsList>
              <PropRow $mt={0}>
                <PropLabel>ID</PropLabel>
                <Field $w={266} $align="flex-start">rectangle2</Field>
                <Unit $w={52} $pl={28}>
                  <AtSign>@</AtSign>
                </Unit>
              </PropRow>
              <PropRow>
                <PropLabel>State</PropLabel>
                <Field $w={266} $align="space-between">base state<Chevron /></Field>
              </PropRow>
              <PropRow>
                <PropLabel />
                <Field $w={266} $align="center" $color="#333">Add Annotation</Field>
              </PropRow>
              <Gap $h={11} />
              <SectionHead><Caret />LOCAL CUSTOM PROPERTIES</SectionHead>
              <PropRow $mt={10}>
                <PropLabel />
                <Field $w={28} $align="center" $color="#222">
                  <Svg width={12} height={12} viewBox="0 0 12 12" $color="#222" strokeWidth={1.6}>
                    <path d="M1 6h10M6 1v10" />
                  </Svg>
                </Field>
              </PropRow>
              <Gap $h={11} />
              <SectionHead><Caret />GEOMETRY - 2D</SectionHead>
              <PropRow $mt={10}>
                <PropLabel>Position</PropLabel>
                <Field $color="#6fbcf5">40</Field>
                <Unit>X</Unit>
                <Field $color="#6fbcf5">40</Field>
                <Unit>Y</Unit>
              </PropRow>
              <PropRow>
                <PropLabel>Size</PropLabel>
                <Field $color="#6fbcf5">120</Field>
                <Unit>W</Unit>
                <Field $color="#6fbcf5">120</Field>
                <Unit>H</Unit>
              </PropRow>
              <PropRow>
                <PropLabel>Rotation</PropLabel>
                <Field>0.00</Field>
                <Unit>°</Unit>
              </PropRow>
              <PropRow>
                <PropLabel>Scale</PropLabel>
                <Field $w={266}>1.00<Chevron /></Field>
                <Unit>%</Unit>
              </PropRow>
              <PropRow>
                <PropLabel>Z stack</PropLabel>
                <Field>0</Field>
              </PropRow>
              <PropRow>
                <PropLabel>Origin</PropLabel>
                <Field $w={28} $align="center"><OriginDot /></Field>
              </PropRow>
              <Gap $h={11} />
              <SectionHead><Caret />VISIBILITY</SectionHead>
              <PropRow $mt={10}>
                <PropLabel>Visibility</PropLabel>
                <Field $w={28} $align="center">
                  <Svg width={12} height={10} viewBox="0 0 12 10" $color="#222" strokeWidth={1.8}>
                    <path d="M1 5l3.500 3.500L11 1" />
                  </Svg>
                </Field>
                <Unit $w={128} $pl={6}>Visible</Unit>
                <Field $w={28} />
                <Unit $pl={6}>Clip</Unit>
              </PropRow>
              <PropRow>
                <PropLabel>Opacity</PropLabel>
                <Field $w={266}>1.00<Chevron /></Field>
              </PropRow>
              <ModeTabs>
                <ModeTab $active>Rectangle</ModeTab>
                <ModeTab>Layout</ModeTab>
              </ModeTabs>
              <SectionHead><Caret />RECTANGLE</SectionHead>
              <PropRow $mt={10}>
                <PropLabel>Fill color</PropLabel>
                <Swatch $color="#8c8c8c" />
                <Unit />
                <Field $align="flex-start">#8c8c8c</Field>
              </PropRow>
              <PropRow>
                <PropLabel>Border color</PropLabel>
                <Swatch $color="#000" />
                <Unit />
                <Field $align="flex-start">#000000</Field>
              </PropRow>
            </PropsList>
            <ScrollTrack
              $top={59}
              $h={340}
              $thumb="#a6a6a6"
              $track="linear-gradient(#c8c8c8 59px, #b4b4b4 59px)"
            />
          </PropsBody>
        </RightPanel>
      </Main>

      <TimelinePanel>
        <TabBar $h={18}>
          <Tab $w={93} $tone="teal" $pad={24}>Timeline<Cross /></Tab>
          <Tab $w={84} $tone="off" $pad={24}>Curves<Cross dark /></Tab>
        </TabBar>
        <TimelineBar>
          <Slot $w={48}><Gear /></Slot>
          <Slot $w={43} $ml={110}>timeline</Slot>
          <Slot $w={40} $ml={7}>
            <Transport d="M2 1v16M16 1L6 9l10 8z" />
          </Slot>
          <Slot $w={36}>
            <Transport d="M15 1v16M11 1L3 9l8 8z" />
          </Slot>
          <Slot $w={44}>
            <Transport d="M4 1l12 8-12 8z" color="#5cc75c" />
          </Slot>
          <Slot $w={28}>
            <Transport d="M3 1v16M7 1l8 8-8 8z" />
          </Slot>
          <Slot $w={56}>
            <Transport d="M16 1v16M2 1l10 8-10 8z" />
          </Slot>
          <Slot $w={46} $ml={20}>
            <Svg width={18} height={18} viewBox="0 0 18 18" $color="#444">
              <path d="M1 11V5h14M12 2l3 3-3 3M17 7v6H3M6 16l-3-3 3-3" />
            </Svg>
          </Slot>
          <SmallBox $ml={5}>1.0</SmallBox>
          <SmallBox $ml={15}>1000</SmallBox>
          <Slot $w={46} $ml={20}>
            <Svg width={18} height={18} viewBox="0 0 18 18" $color="#333">
              <circle cx="9" cy="9" r="8" />
            </Svg>
          </Slot>
          <CurveButton>
            <Svg width={18} height={18} viewBox="0 0 18 18" $color="#444">
              <circle cx="3.500" cy="14" r="2" />
              <circle cx="14.500" cy="4" r="2" />
              <path d="M5.500 14c5 0 0-9 7-10" />
            </Svg>
          </CurveButton>
          <Spacer />
          <SmallBox $ml={0}>0</SmallBox>
          <Slot $w={46} $ml={20}><PlusCircle minus /></Slot>
          <SliderTrack />
          <Slot $w={46} $ml={9}><PlusCircle /></Slot>
          <SmallBox $ml={20} $w={48}>1000</SmallBox>
          <Slot $w={54} $ml={27}>Base State</Slot>
        </TimelineBar>
        <RulerRow>
          <RulerLeft />
          <RulerBody>
            <Ruler />
            <Marker $start />
            <Marker />
            <PlayheadCap />
          </RulerBody>
        </RulerRow>
        <TrackRow>
          <TrackLeft />
          <TrackRight />
        </TrackRow>
        <TrackRow>
          <TrackLeft>
            <Slot $w={16}><Caret /></Slot>
            <TrackName $ml={8}>item1</TrackName>
          </TrackLeft>
          <TrackRight>
            <ClipBar />
          </TrackRight>
        </TrackRow>
        <TrackRow>
          <TrackLeft $tone="#d8d8d8">
            <KeyTools>
              <Svg width={48} height={14} viewBox="0 0 48 14" $color="#777">
                <path d="M11 3v8L2 7zM19 2l5 5-5 5-5-5zM26 3v8l9-4z" fill="#777" stroke="none" />
                <path d="M19 5l2 2-2 2-2-2z" fill="#e6e23c" stroke="none" />
                <circle cx="43" cy="7" r="4.500" />
              </Svg>
            </KeyTools>
            <TrackName $ml={4} $w={70}>rotation</TrackName>
            <Slot $w={54}>360.00</Slot>
          </TrackLeft>
          <TrackRight>
            <Diamond $color="#d9832a" $x={10} />
            <Diamond $color="#333" $x={1565} />
          </TrackRight>
        </TrackRow>
        <TrackRow>
          <TrackLeft />
          <TrackRight />
        </TrackRow>
        <TimelineFill />
        <Playhead />
        <VScroll />
        <HScroll />
        <KeyframeText>Keyframe 0</KeyframeText>
        <Tooltip>Easing Curve Editor C</Tooltip>
      </TimelinePanel>

      <StatusBar>
        <StatusInner>
          <Slot $w={38}><Gear /></Slot>
          <Slot $w={20} $ml={20}>Kit</Slot>
          <Combo $w={160} $h={29} $ml={27} $border="#c8c8c8" $pad={7}>
            Desktop Qt 6.5.1
            <Chevron color="#444" />
          </Combo>
          <Slot $w={30} $ml={26}>Style</Slot>
          <Combo $w={160} $h={29} $ml={27} $border="#c8c8c8" $pad={7}>
            Basic
            <Chevron color="#444" />
          </Combo>
        </StatusInner>
      </StatusBar>
    </Page>
  );
};

export default App;
